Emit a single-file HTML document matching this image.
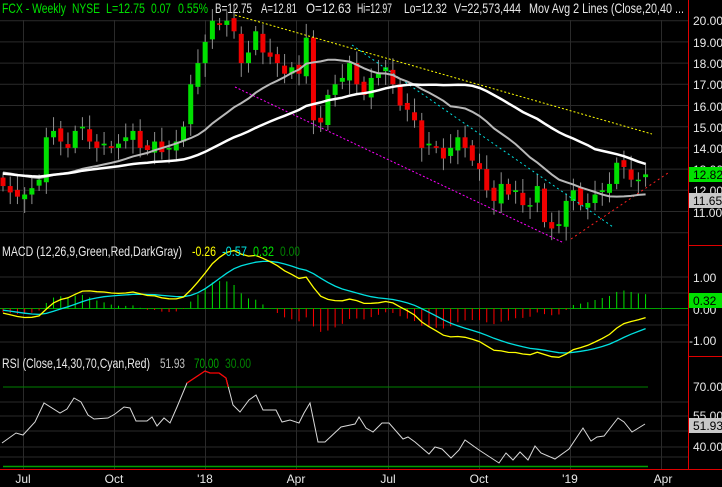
<!DOCTYPE html>
<html><head><meta charset="utf-8"><style>
html,body{margin:0;padding:0;background:#000;width:722px;height:487px;overflow:hidden}
svg{display:block}
text{font-family:"Liberation Sans",sans-serif}
</style></head><body>
<svg id="s" width="722" height="487" viewBox="0 0 722 487" xmlns="http://www.w3.org/2000/svg">
<rect width="722" height="487" fill="#000"/>
<g id="grid" stroke="#2a2a2a" stroke-width="1"></g>
<g id="draw"></g>
<g stroke="#e00000" stroke-width="1">
<line x1="688.5" y1="0" x2="688.5" y2="470"/>
<line x1="688" y1="245.5" x2="722" y2="245.5"/>
<line x1="688" y1="356.5" x2="722" y2="356.5"/>
<line x1="0" y1="469.5" x2="722" y2="469.5"/>
</g>
<g font-size="14">
<text x="2" y="13" fill="#00e000" textLength="64" lengthAdjust="spacingAndGlyphs">FCX - Weekly</text>
<text x="72" y="13" fill="#00e000" textLength="28" lengthAdjust="spacingAndGlyphs">NYSE</text>
<text x="106" y="13" fill="#00e000" textLength="39" lengthAdjust="spacingAndGlyphs">L=12.75</text>
<text x="151" y="13" fill="#00e000" textLength="20" lengthAdjust="spacingAndGlyphs">0.07</text>
<text x="178" y="13" fill="#00e000" textLength="30" lengthAdjust="spacingAndGlyphs">0.55%</text>
<text x="215" y="13" fill="#e8e8e8" textLength="37" lengthAdjust="spacingAndGlyphs">B=12.75</text>
<text x="261" y="13" fill="#e8e8e8" textLength="36" lengthAdjust="spacingAndGlyphs">A=12.81</text>
<text x="306" y="13" fill="#e8e8e8" textLength="45" lengthAdjust="spacingAndGlyphs">O=12.63</text>
<text x="357" y="13" fill="#e8e8e8" textLength="35" lengthAdjust="spacingAndGlyphs">Hi=12.97</text>
<text x="404" y="13" fill="#e8e8e8" textLength="43" lengthAdjust="spacingAndGlyphs">Lo=12.32</text>
<text x="454" y="13" fill="#e8e8e8" textLength="67" lengthAdjust="spacingAndGlyphs">V=22,573,444</text>
<text x="529" y="13" fill="#e8e8e8" textLength="155" lengthAdjust="spacingAndGlyphs">Mov Avg 2 Lines (Close,20,40 ...</text>
<text x="2" y="256" fill="#e8e8e8" textLength="180" lengthAdjust="spacingAndGlyphs">MACD (12,26,9,Green,Red,DarkGray)</text>
<text x="192" y="256" fill="#ffff00" textLength="24" lengthAdjust="spacingAndGlyphs">-0.26</text>
<text x="222" y="256" fill="#00e0e0" textLength="25" lengthAdjust="spacingAndGlyphs">-0.57</text>
<text x="253" y="256" fill="#00e000" textLength="21" lengthAdjust="spacingAndGlyphs">0.32</text>
<text x="280" y="256" fill="#008000" textLength="20" lengthAdjust="spacingAndGlyphs">0.00</text>
<text x="2" y="368" fill="#e8e8e8" textLength="148" lengthAdjust="spacingAndGlyphs">RSI (Close,14,30,70,Cyan,Red)</text>
<text x="160" y="368" fill="#c0c0c0" textLength="25" lengthAdjust="spacingAndGlyphs">51.93</text>
<text x="194" y="368" fill="#00a000" textLength="25" lengthAdjust="spacingAndGlyphs">70.00</text>
<text x="225" y="368" fill="#008000" textLength="26" lengthAdjust="spacingAndGlyphs">30.00</text>
</g>
<g font-size="12" fill="#e8e8e8">
<text x="693" y="25">20.00</text><text x="693" y="47">19.00</text><text x="693" y="68">18.00</text>
<text x="693" y="89">17.00</text><text x="693" y="111">16.00</text><text x="693" y="132">15.00</text>
<text x="693" y="153">14.00</text><text x="693" y="174">13.00</text><text x="693" y="195">12.00</text>
<text x="693" y="217">11.00</text>
<text x="693" y="282">1.00</text><text x="693" y="314">0.00</text><text x="689" y="345">-1.00</text>
<text x="693" y="391">70.00</text><text x="693" y="420">55.00</text><text x="693" y="451">40.00</text>
</g>
<rect x="689" y="167" width="33" height="15" fill="#00e000"/>
<text x="693" y="179" font-size="12" fill="#000">12.82</text>
<rect x="689" y="193" width="33" height="15" fill="#c8c8c8"/>
<text x="693" y="205" font-size="12" fill="#000">11.65</text>
<rect x="689" y="293" width="33" height="15" fill="#00e000"/>
<text x="693" y="305" font-size="12" fill="#000">0.32</text>
<rect x="689" y="418" width="33" height="15" fill="#c8c8c8"/>
<text x="693" y="430" font-size="12" fill="#000">51.93</text>
<g font-size="12" fill="#e8e8e8" text-anchor="middle">
<text x="23" y="483">Jul</text><text x="114" y="483">Oct</text><text x="205" y="483">'18</text>
<text x="296" y="483">Apr</text><text x="388" y="483">Jul</text><text x="479" y="483">Oct</text>
<text x="570" y="483">'19</text><text x="663" y="483">Apr</text>
</g>
</svg>
<script>
var NS="http://www.w3.org/2000/svg",g=document.getElementById('draw'),gr=document.getElementById('grid');
function el(t,a,p){var e=document.createElementNS(NS,t);for(var k in a)e.setAttribute(k,a[k]);(p||g).appendChild(e);return e;}
[23,114,205,296,388,479,570,661].forEach(function(x){el('line',{x1:x+.5,y1:20,x2:x+.5,y2:469},gr);});
function py(p){return 20.7+(20-p)*21.2;}
for(var p=10;p<=20;p++)el('line',{x1:0,y1:py(p),x2:688,y2:py(p)},gr);
[277,293,325,342].forEach(function(y){el('line',{x1:0,y1:y,x2:688,y2:y},gr);});
[402,416,431,447,457].forEach(function(y){el('line',{x1:0,y1:y,x2:688,y2:y},gr);});
var C=[12.2,11.9,11.7,11.8,12.1,12.5,14.5,14.8,14.3,14.0,14.8,15.0,14.3,14.0,14.2,14.0,14.2,14.5,14.8,14.0,13.9,14.3,13.8,14.0,14.3,15.0,17.0,18.0,19.0,20.0,19.8,20.0,19.5,18.0,18.5,19.5,18.5,18.3,18.0,17.5,17.8,17.5,19.2,15.3,15.2,16.5,17.0,17.3,18.0,17.0,16.5,17.3,17.5,17.8,17.0,16.0,15.8,15.3,14.0,14.2,14.0,13.5,14.0,14.5,14.0,13.4,13.0,12.0,11.5,12.3,11.8,12.0,11.3,11.3,12.2,10.5,10.2,10.4,11.5,12.0,11.3,11.4,11.8,12.0,12.3,13.3,13.1,12.5,12.5,12.75];
var H=[];for(var i=0;i<45;i++)H.push(12.8+0.4*Math.sin(i/4));
var A=H.concat(C),off=H.length;
function X(i){return 3+i*7.22;}
for(var i=0;i<C.length;i++){var c=C[i],o=i?C[i-1]+(i%3-1)*0.12:12.6;var hi=Math.max(o,c)+0.25+((i*7)%5)*0.1,lo=Math.min(o,c)-0.25-((i*3)%5)*0.1;var x=X(i);
el('line',{x1:x,y1:py(hi),x2:x,y2:py(lo),stroke:'#909090','stroke-width':1});
var t=py(Math.max(o,c)),b=py(Math.min(o,c));if(b-t<1.5)b=t+1.5;
el('rect',{x:x-2.5,y:t,width:5,height:b-t,fill:c>=o?'#00e000':'#f00000'});}
function sma(n){var r=[];for(var i=0;i<C.length;i++){var s=0;for(var k=0;k<n;k++)s+=A[off+i-k];r.push(s/n);}return r;}
function pl(arr,yf,col,w){var pts=[];for(var i=0;i<arr.length;i++)pts.push(X(i).toFixed(1)+','+yf(arr[i]).toFixed(1));el('polyline',{points:pts.join(' '),fill:'none',stroke:col,'stroke-width':w});}
el('line',{x1:235,y1:15,x2:652,y2:134,stroke:'#ffff00','stroke-dasharray':'2,2'});
el('line',{x1:235,y1:87,x2:564,y2:243,stroke:'#ff00ff','stroke-dasharray':'2,2'});
el('line',{x1:352,y1:45,x2:613,y2:227,stroke:'#00e0e0','stroke-dasharray':'2,3'});
el('line',{x1:571,y1:239,x2:668,y2:173,stroke:'#ff2020','stroke-dasharray':'2,3'});
pl(sma(20),py,'#b8b8b8',2);pl(sma(40),py,'#ffffff',2.5);
function ema(a,n){var k=2/(n+1),r=[a[0]];for(var i=1;i<a.length;i++)r.push(a[i]*k+r[i-1]*(1-k));return r;}
var e12=ema(A,12),e26=ema(A,26),m=A.map(function(v,i){return (e12[i]-e26[i])*1.15;}),sg=ema(m,9);
var M=m.slice(off),S=sg.slice(off);
function my(v){return 308.5-v*31;}
el('line',{x1:0,y1:308.5,x2:688,y2:308.5,stroke:'#00a000'});
for(var i=0;i<M.length;i++){var h=M[i]-S[i];el('line',{x1:X(i),y1:308.5,x2:X(i),y2:my(h*1.3),stroke:h>=0?'#00e000':'#ff0000','stroke-width':1});}
pl(S,my,'#00e0e0',1.3);pl(M,my,'#ffff00',1.3);
el('line',{x1:3,y1:387,x2:648,y2:387,stroke:'#008000'});
el('line',{x1:3,y1:466.5,x2:648,y2:466.5,stroke:'#00a000','stroke-width':1.5});
var R=[[2,443],[16,433],[23,435],[35,422],[44,403],[60,413],[67,409],[74,398],[81,402],[88,415],[94,419],[108,418],[115,414],[124,407],[130,408],[136,421],[147,421],[152,417],[157,426],[164,418],[170,423],[177,407],[187,383],[205,371],[210,373],[219,373],[226,378],[233,405],[240,412],[249,400],[256,395],[263,410],[276,410],[282,422],[290,420],[299,423],[304,413],[310,403],[318,442],[325,442],[341,427],[355,424],[359,417],[366,428],[373,432],[382,423],[389,423],[403,439],[408,437],[415,442],[429,454],[435,447],[442,449],[451,458],[459,450],[465,440],[479,450],[499,463],[506,453],[513,460],[520,452],[528,460],[535,446],[541,453],[555,459],[569,449],[583,428],[591,441],[597,437],[604,436],[618,418],[624,422],[632,432],[645,424]];
el('polyline',{points:R.map(function(p){return p.join(',');}).join(' '),fill:'none',stroke:'#d8d8d8','stroke-width':1});
el('polyline',{points:'187,383 205,371 210,373 219,373 226,378 228,387',fill:'none',stroke:'#ff0000','stroke-width':1.2});
</script>
</body></html>
